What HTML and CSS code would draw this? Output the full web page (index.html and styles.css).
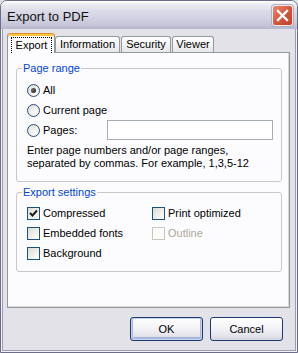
FILE: index.html
```html
<!DOCTYPE html>
<html>
<head>
<meta charset="utf-8">
<link rel="stylesheet" href="styles.css">
</head>
<body>
<div class="window">
  <div class="titlebar">
    <span class="title">Export to PDF</span>
    <span class="close">
      <svg width="21" height="21" viewBox="0 0 21 21">
        <path d="M6 6 L15 15 M15 6 L6 15" stroke="#ffffff" stroke-width="2.4" stroke-linecap="square" fill="none"/>
      </svg>
    </span>
  </div>
  <div class="frame">
    <div class="tabs">
      <div class="tab active t-export"><span class="focus">Export</span></div>
      <div class="tab t-info">Information</div>
      <div class="tab t-sec">Security</div>
      <div class="tab t-view">Viewer</div>
    </div>
    <div class="panel">
      <fieldset class="group g-range">
        <legend>Page range</legend>
        <div class="opt"><span class="radio checked"></span><span>All</span></div>
        <div class="opt"><span class="radio"></span><span>Current page</span></div>
        <div class="opt"><span class="radio"></span><span>Pages:</span><span class="input"></span></div>
        <p class="hint">Enter page numbers and/or page ranges,<br>separated by commas. For example, 1,3,5-12</p>
      </fieldset>
      <fieldset class="group g-settings">
        <legend>Export settings</legend>
        <div class="checks">
          <div class="opt"><span class="check checked"><svg width="11" height="11" viewBox="0 0 11 11"><path d="M2 5 L4.5 7.5 L9 2.5" stroke="#1e1e1e" stroke-width="2" fill="none"/></svg></span><span>Compressed</span></div>
          <div class="opt"><span class="check"></span><span>Print optimized</span></div>
          <div class="opt"><span class="check"></span><span>Embedded fonts</span></div>
          <div class="opt disabled"><span class="check"></span><span>Outline</span></div>
          <div class="opt"><span class="check"></span><span>Background</span></div>
        </div>
      </fieldset>
    </div>
    <div class="buttons">
      <button class="btn default">OK</button>
      <button class="btn">Cancel</button>
    </div>
  </div>
</div>
</body>
</html>
```

FILE: styles.css
```css
* { box-sizing: border-box; }
html, body { margin: 0; padding: 0; }
body {
  width: 298px;
  height: 353px;
  font-family: "Liberation Sans", Arial, sans-serif;
  font-size: 11px;
  color: #000;
  background: #e3e2e8;
}
.window {
  width: 298px;
  height: 353px;
  display: flex;
  flex-direction: column;
  border: 1px solid #6d6d87;
  border-radius: 7px 7px 0 0;
  background: #f2f2f6;
  overflow: hidden;
}
.titlebar {
  height: 28px;
  flex: none;
  display: flex;
  justify-content: space-between;
  align-items: flex-start;
  padding-left: 6px;
  background: linear-gradient(to bottom, #ffffff 0%, #ececf2 12%, #dcdce8 35%, #d2d2e2 60%, #c6c6d8 85%, #b6b6cc 100%);
}
.title {
  font-size: 13px;
  line-height: 15px;
  margin-top: 8px;
  color: #111;
}
.close {
  width: 21px;
  height: 21px;
  margin-top: 4px;
  margin-right: 4px;
  border: 1px solid #f8e8e4;
  border-radius: 3px;
  background: linear-gradient(135deg, #e88a74 0%, #d4583c 50%, #c2402a 100%);
  box-shadow: 0 0 0 1px #b0b0c4;
  display: flex;
  align-items: center;
  justify-content: center;
}
.close svg { display: block; margin: -1px; }
.frame {
  flex: 1;
  margin: 0 1px 1px;
  border: 1px solid #9c9cb2;
  border-top: none;
  background: #e3e2e8;
  padding: 4px 5px 9px 4px;
  display: flex;
  flex-direction: column;
}
.tabs {
  height: 19px;
  display: flex;
  align-items: flex-end;
}
.tab {
  height: 16px;
  border: 1px solid #919b9c;
  border-bottom: none;
  border-radius: 3px 3px 0 0;
  background: linear-gradient(to bottom, #ffffff 0%, #f4f4f6 50%, #e6e6ec 100%);
  text-align: center;
  line-height: 15px;
  color: #000;
  margin-right: 1px;
}
.t-export { width: 48px; }
.t-info { width: 65px; }
.t-sec { width: 50px; }
.t-view { width: 42px; }
.tab.active {
  height: 20px;
  margin-bottom: -1px;
  margin-right: 0;
  position: relative;
  z-index: 1;
  background: #fcfcfe;
  border-top: 1px solid #e68b2c;
  box-shadow: inset 0 2px 0 #ffc73c;
  padding: 3px 2px 0 3px;
  line-height: 13px;
}
.focus {
  display: block;
  height: 16px;
  border: 1px dotted #000;
  border-bottom: none;
  padding-top: 1px;
  line-height: 13px;
}
.panel {
  height: 256px;
  flex: none;
  width: 283px;
  border: 1px solid #919b9c;
  border-right-color: #8a9496;
  box-shadow: inset -1px -1px 0 #dcdcd4;
  background: #fcfcfe;
  padding: 9px 7px 0 8px;
}
.group {
  margin: 0;
  border: 1px solid #c8c8cc;
  border-radius: 3px;
  padding: 0 8px 0 10px;
  min-width: 0;
}
.group legend {
  color: #0046d5;
  line-height: 13px;
  padding: 0 1px;
  margin-left: -5px;
}
.g-range { padding-top: 5px; padding-bottom: 11px; }
.g-settings { margin-top: 4px; padding-top: 4px; padding-bottom: 8px; }
.opt {
  height: 20px;
  display: flex;
  align-items: center;
  white-space: nowrap;
}
.radio {
  width: 13px;
  height: 13px;
  border-radius: 50%;
  border: 1px solid #2b4d78;
  background: radial-gradient(circle at 70% 70%, #ffffff 0%, #f0f0ee 40%, #d8d8d4 100%);
  margin-right: 3px;
  flex: none;
  display: flex;
  align-items: center;
  justify-content: center;
}
.radio.checked::after {
  content: "";
  width: 5px;
  height: 5px;
  border-radius: 50%;
  background: radial-gradient(circle at 35% 35%, #6a6a6a, #1a1a1a);
}
.input {
  margin-left: auto;
  width: 166px;
  height: 20px;
  border: 1px solid #a5acb2;
  background: #fff;
}
.hint {
  margin: 4px 0 0;
  line-height: 13px;
}
.checks {
  display: grid;
  grid-template-columns: 125px auto;
}
.check {
  width: 13px;
  height: 13px;
  border: 1px solid #1c5180;
  background: linear-gradient(135deg, #dcdcd7 0%, #f4f4f2 70%, #ffffff 100%);
  margin-right: 3px;
  flex: none;
  display: flex;
  align-items: center;
  justify-content: center;
}
.check svg { display: block; }
.disabled { color: #aca899; }
.disabled .check { border-color: #cac8bb; background: #fcfcfb; }
.buttons {
  display: flex;
  justify-content: flex-end;
  gap: 7px;
  margin-top: 9px;
  padding-right: 7px;
}
.btn {
  width: 73px;
  height: 24px;
  font-family: "Liberation Sans", Arial, sans-serif;
  font-size: 11px;
  color: #000;
  border: 1px solid #1c3a6e;
  border-radius: 3px;
  background: linear-gradient(to bottom, #ffffff 0%, #f4f4f8 45%, #e4e4ec 80%, #d4d4de 100%);
  padding: 0;
  margin: 0;
}
.btn.default {
  box-shadow: inset 0 0 0 1px #c6d4f0, inset 0 -1px 0 2px #aab8de;
}
```
